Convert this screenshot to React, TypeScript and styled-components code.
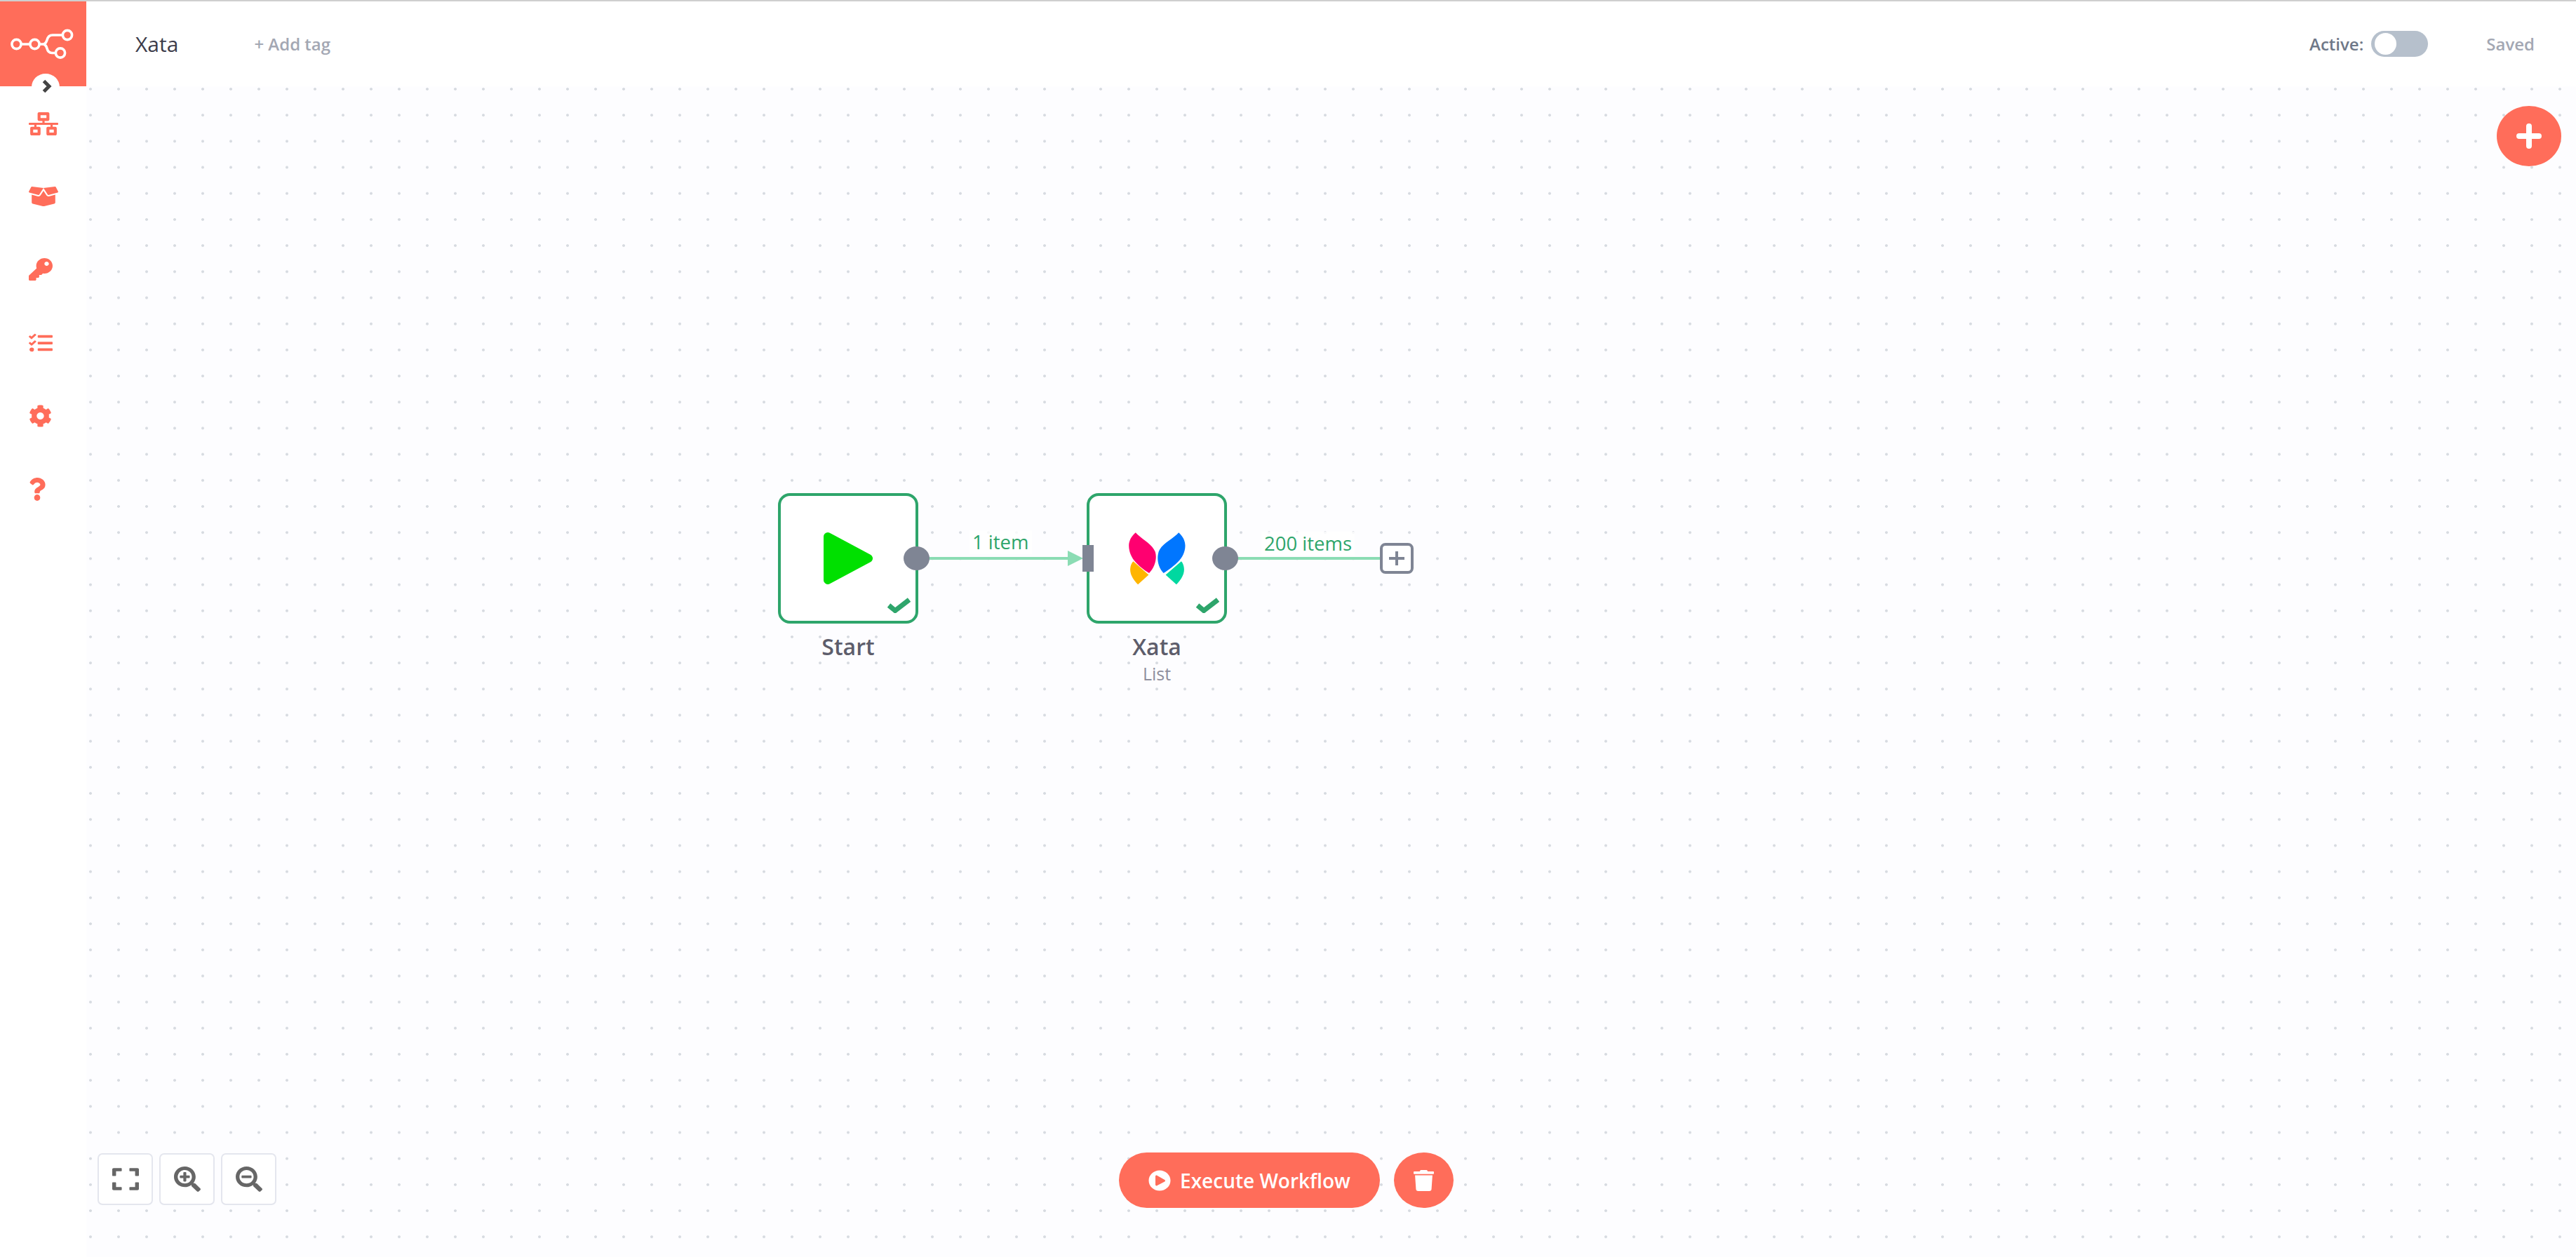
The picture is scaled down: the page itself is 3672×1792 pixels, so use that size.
import React from 'react';
import styled, { createGlobalStyle } from 'styled-components';
import {
  FaBoxOpen,
  FaCog,
  FaExpand,
  FaKey,
  FaNetworkWired,
  FaPlayCircle,
  FaQuestion,
  FaSearchMinus,
  FaSearchPlus,
  FaTasks,
  FaTrash,
} from 'react-icons/fa';

const CORAL = '#ff6d5a';
const GREEN = '#2ea56b';
const EDGE_GREEN = '#8bdcb4';
const SLATE = '#7f8594';

const GlobalStyle = createGlobalStyle`
  html, body {
    margin: 0;
    padding: 0;
    background: #ffffff;
  }
  body {
    font-family: "Open Sans", "Liberation Sans", sans-serif;
  }
`;

const Page = styled.div`
  border-top: 2px solid #cfcfcf;
  box-sizing: border-box;
  display: flex;
  height: 1792px;
  overflow: hidden;
  width: 3672px;
`;

const Sidebar = styled.aside`
  background: #ffffff;
  display: flex;
  flex: 0 0 123px;
  flex-direction: column;
  position: relative;
`;

const LogoBlock = styled.div`
  align-items: center;
  background: ${CORAL};
  display: flex;
  flex: 0 0 121px;
  justify-content: center;
  padding-right: 3px;
`;

const CollapseButton = styled.div`
  align-items: center;
  background: #ffffff;
  border-radius: 50%;
  display: flex;
  height: 38px;
  justify-content: center;
  left: 45px;
  padding: 0 0 2px 3px;
  box-sizing: border-box;
  position: absolute;
  top: 103px;
  width: 40px;
`;

const Nav = styled.nav`
  display: flex;
  flex-direction: column;
  padding-top: 1px;
`;

const NavItem = styled.div`
  align-items: center;
  color: ${CORAL};
  display: flex;
  height: 104.2px;
  padding-left: 41px;
`;

const NavIcon = styled.span<{ $w: number; $h: number }>`
  display: flex;
  svg {
    display: block;
    height: ${(p) => p.$h}px;
    width: ${(p) => p.$w}px;
  }
`;

const Main = styled.main`
  display: flex;
  flex: 1;
  flex-direction: column;
  min-width: 0;
`;

const TopBar = styled.header`
  align-items: center;
  background: #ffffff;
  display: flex;
  flex: 0 0 121px;
  padding: 0 59px 0 70px;
`;

const WorkflowName = styled.span`
  color: #3c3c4a;
  font-size: 30px;
`;

const AddTag = styled.span`
  color: #a3a7b3;
  font-size: 24px;
  font-weight: 600;
  margin-left: 108px;
`;

const Spacer = styled.div`
  flex: 1;
`;

const ActiveLabel = styled.span`
  color: #6f7888;
  font-size: 24px;
  font-weight: 600;
`;

const Toggle = styled.div`
  background: #b6c0cc;
  border-radius: 19px;
  box-sizing: border-box;
  height: 37px;
  margin-left: 11px;
  padding: 3px 5px;
  width: 81px;
`;

const ToggleKnob = styled.div`
  background: #ffffff;
  border-radius: 50%;
  height: 31px;
  width: 31px;
`;

const SaveState = styled.span`
  color: #a3a7b3;
  font-size: 24px;
  font-weight: 600;
  margin-left: 83px;
`;

const Canvas = styled.section`
  background-color: #fdfdff;
  background-image: radial-gradient(ellipse 2.400px 2.200px at center, #d6dae0 65%, transparent 100%);
  background-position: -14px -14.600px;
  background-size: 40px 37.200px;
  flex: 1;
  position: relative;
`;

const AddNodeButton = styled.div`
  align-items: center;
  background: ${CORAL};
  border-radius: 50%;
  display: flex;
  height: 86px;
  justify-content: center;
  position: absolute;
  right: 21px;
  top: 28px;
  width: 92px;
`;

const Connections = styled.svg`
  height: 100%;
  left: 0;
  position: absolute;
  top: 0;
  width: 100%;
`;

const EdgeLabel = styled.span<{ $x: number; $y: number }>`
  background: rgba(255, 255, 255, 0.8);
  color: ${GREEN};
  font-size: 27.500px;
  left: ${(p) => p.$x}px;
  line-height: 34px;
  padding: 0 4px;
  position: absolute;
  top: ${(p) => p.$y}px;
  white-space: nowrap;
`;

const NodeWrap = styled.div<{ $x: number; $y: number }>`
  align-items: center;
  display: flex;
  flex-direction: column;
  left: ${(p) => p.$x}px;
  position: absolute;
  top: ${(p) => p.$y}px;
  width: 200px;
`;

const NodeBox = styled.div`
  align-items: center;
  background: #ffffff;
  border: 4px solid ${GREEN};
  border-radius: 17px;
  box-sizing: border-box;
  display: flex;
  height: 186px;
  justify-content: center;
  position: relative;
  width: 200px;
`;

const OutputDot = styled.div`
  background: ${SLATE};
  border-radius: 50%;
  height: 34px;
  position: absolute;
  right: -20px;
  top: 72px;
  width: 37px;
`;

const InputBar = styled.div`
  background: ${SLATE};
  height: 38px;
  left: -10px;
  position: absolute;
  top: 70px;
  width: 16px;
`;

const DoneCheck = styled.svg`
  bottom: 11px;
  height: 22px;
  position: absolute;
  right: 7px;
  width: 33px;
`;

const NodeTitle = styled.div`
  color: #5d5d6b;
  font-size: 32px;
  font-weight: 600;
  line-height: 40px;
  margin-top: 13px;
`;

const NodeSubtitle = styled.div`
  color: #8f8f9d;
  font-size: 25px;
  line-height: 32px;
  margin-top: 2px;
`;

const PlusBox = styled.div`
  align-items: center;
  background: #ffffff;
  border: 4px solid ${SLATE};
  border-radius: 8px;
  box-sizing: border-box;
  display: flex;
  height: 44px;
  justify-content: center;
  left: 1844px;
  position: absolute;
  top: 651px;
  width: 48px;
`;

const ZoomControls = styled.div`
  bottom: 74px;
  display: flex;
  gap: 9px;
  left: 16px;
  position: absolute;
`;

const ZoomButton = styled.div`
  align-items: center;
  background: #ffffff;
  border: 2px solid #e4e6ee;
  border-radius: 7px;
  box-sizing: border-box;
  color: #666666;
  display: flex;
  height: 74px;
  justify-content: center;
  width: 79px;

  svg {
    display: block;
    height: 36px;
    width: 38px;
  }
`;

const RunControls = styled.div`
  bottom: 70px;
  display: flex;
  gap: 20px;
  left: 1472px;
  position: absolute;
`;

const ExecuteButton = styled.div`
  align-items: center;
  background: ${CORAL};
  border-radius: 40px;
  color: #ffffff;
  display: flex;
  font-size: 28px;
  font-weight: 600;
  gap: 13px;
  height: 79px;
  justify-content: center;
  width: 372px;

  svg {
    height: 30px;
    width: 32px;
  }
`;

const TrashButton = styled.div`
  align-items: center;
  background: ${CORAL};
  border-radius: 50%;
  color: #ffffff;
  display: flex;
  height: 79px;
  justify-content: center;
  width: 85px;

  svg {
    height: 30px;
    width: 29px;
  }
`;

const Logo = () => (
  <svg width="92" height="46" viewBox="14 40 92 46" fill="none" stroke="#ffffff" strokeWidth="3.600">
    <circle cx="23.500" cy="63" r="6.600" />
    <circle cx="49.500" cy="63" r="6.600" />
    <circle cx="96" cy="50" r="6.600" />
    <circle cx="86" cy="75.500" r="6.600" />
    <path d="M30 63h13M56 63h5c4 0 5-3 6-6 1-4 4-7 8-7h14.500M61 63c4 0 5 3 6 6 1 4 3 6.500 7 6.500h5.500" />
  </svg>
);

const Chevron = () => (
  <svg width="14" height="20" viewBox="0 0 14 20" fill="none" stroke="#444444" strokeWidth="5">
    <path d="M2.500 2.500 10 10l-7.500 7.500" />
  </svg>
);

const Check = () => (
  <DoneCheck viewBox="0 0 33 22" fill="none" stroke={GREEN} strokeWidth="7">
    <path d="M2 11l9 7.500L31 3" />
  </DoneCheck>
);

const PlayIcon = () => (
  <svg width="70" height="74" viewBox="0 0 70 74" fill="#00e000" stroke="#00e000" strokeWidth="12" strokeLinejoin="round">
    <path d="M6 6 64 37 6 68Z" />
  </svg>
);

const XataLogo = () => (
  <svg width="85" height="78" viewBox="260 230 255 235">
    <path fill="#ff0070" d="M295 237c28 30 70 48 84 82 8 24 2 64-26 92-44-30-86-62-87-118 0-22 12-42 29-56z" />
    <path fill="#0076ff" d="M480 237c-28 30-74 48-86 82-8 26-6 62 21 92 46-32 92-62 93-118 0-22-12-42-28-56z" />
    <path fill="#ffb500" d="M285 360l66 58-46 42c-22-22-38-48-32-76 2-10 6-18 12-24z" />
    <path fill="#00d8a0" d="M491 360l-67 58 46 42c22-22 38-48 32-76-2-10-5-18-11-24z" />
  </svg>
);

export default function App() {
  return (
    <>
      <GlobalStyle />
      <Page>
        <Sidebar>
          <LogoBlock>
            <Logo />
          </LogoBlock>
          <CollapseButton>
            <Chevron />
          </CollapseButton>
          <Nav>
            <NavItem><NavIcon $w={42} $h={33}><FaNetworkWired preserveAspectRatio="none" /></NavIcon></NavItem>
            <NavItem><NavIcon $w={42} $h={32}><FaBoxOpen preserveAspectRatio="none" /></NavIcon></NavItem>
            <NavItem><NavIcon $w={34} $h={32}><FaKey preserveAspectRatio="none" /></NavIcon></NavItem>
            <NavItem><NavIcon $w={34} $h={30}><FaTasks preserveAspectRatio="none" /></NavIcon></NavItem>
            <NavItem><NavIcon $w={33} $h={32}><FaCog preserveAspectRatio="none" /></NavIcon></NavItem>
            <NavItem><NavIcon $w={24} $h={33}><FaQuestion preserveAspectRatio="none" /></NavIcon></NavItem>
          </Nav>
        </Sidebar>
        <Main>
          <TopBar>
            <WorkflowName>Xata</WorkflowName>
            <AddTag>+ Add tag</AddTag>
            <Spacer />
            <ActiveLabel>Active:</ActiveLabel>
            <Toggle>
              <ToggleKnob />
            </Toggle>
            <SaveState>Saved</SaveState>
          </TopBar>
          <Canvas>
            <AddNodeButton>
              <svg width="36" height="36" viewBox="0 0 36 36" fill="none" stroke="#ffffff" strokeWidth="8" strokeLinecap="round">
                <path d="M18 4v28M4 18h28" />
              </svg>
            </AddNodeButton>

            <Connections>
              <path d="M1200 673H1400" stroke={EDGE_GREEN} strokeWidth="4" fill="none" />
              <path d="M1399 662l22 11-22 11z" fill={EDGE_GREEN} />
              <path d="M1640 673H1846" stroke={EDGE_GREEN} strokeWidth="4" fill="none" />
            </Connections>

            <NodeWrap $x={986} $y={580}>
              <NodeBox>
                <PlayIcon />
                <OutputDot />
                <Check />
              </NodeBox>
              <NodeTitle>Start</NodeTitle>
            </NodeWrap>
            <EdgeLabel $x={1259} $y={633}>1 item</EdgeLabel>

            <NodeWrap $x={1426} $y={580}>
              <NodeBox>
                <XataLogo />
                <InputBar />
                <OutputDot />
                <Check />
              </NodeBox>
              <NodeTitle>Xata</NodeTitle>
              <NodeSubtitle>List</NodeSubtitle>
            </NodeWrap>
            <EdgeLabel $x={1675} $y={635}>200 items</EdgeLabel>

            <PlusBox>
              <svg width="22" height="20" viewBox="0 0 22 20" fill="none" stroke={SLATE} strokeWidth="4">
                <path d="M11 0v20M0 10h22" />
              </svg>
            </PlusBox>

            <ZoomControls>
              <ZoomButton><FaExpand preserveAspectRatio="none" /></ZoomButton>
              <ZoomButton><FaSearchPlus preserveAspectRatio="none" /></ZoomButton>
              <ZoomButton><FaSearchMinus preserveAspectRatio="none" /></ZoomButton>
            </ZoomControls>

            <RunControls>
              <ExecuteButton>
                <FaPlayCircle preserveAspectRatio="none" />
                Execute Workflow
              </ExecuteButton>
              <TrashButton>
                <FaTrash preserveAspectRatio="none" />
              </TrashButton>
            </RunControls>
          </Canvas>
        </Main>
      </Page>
    </>
  );
}
